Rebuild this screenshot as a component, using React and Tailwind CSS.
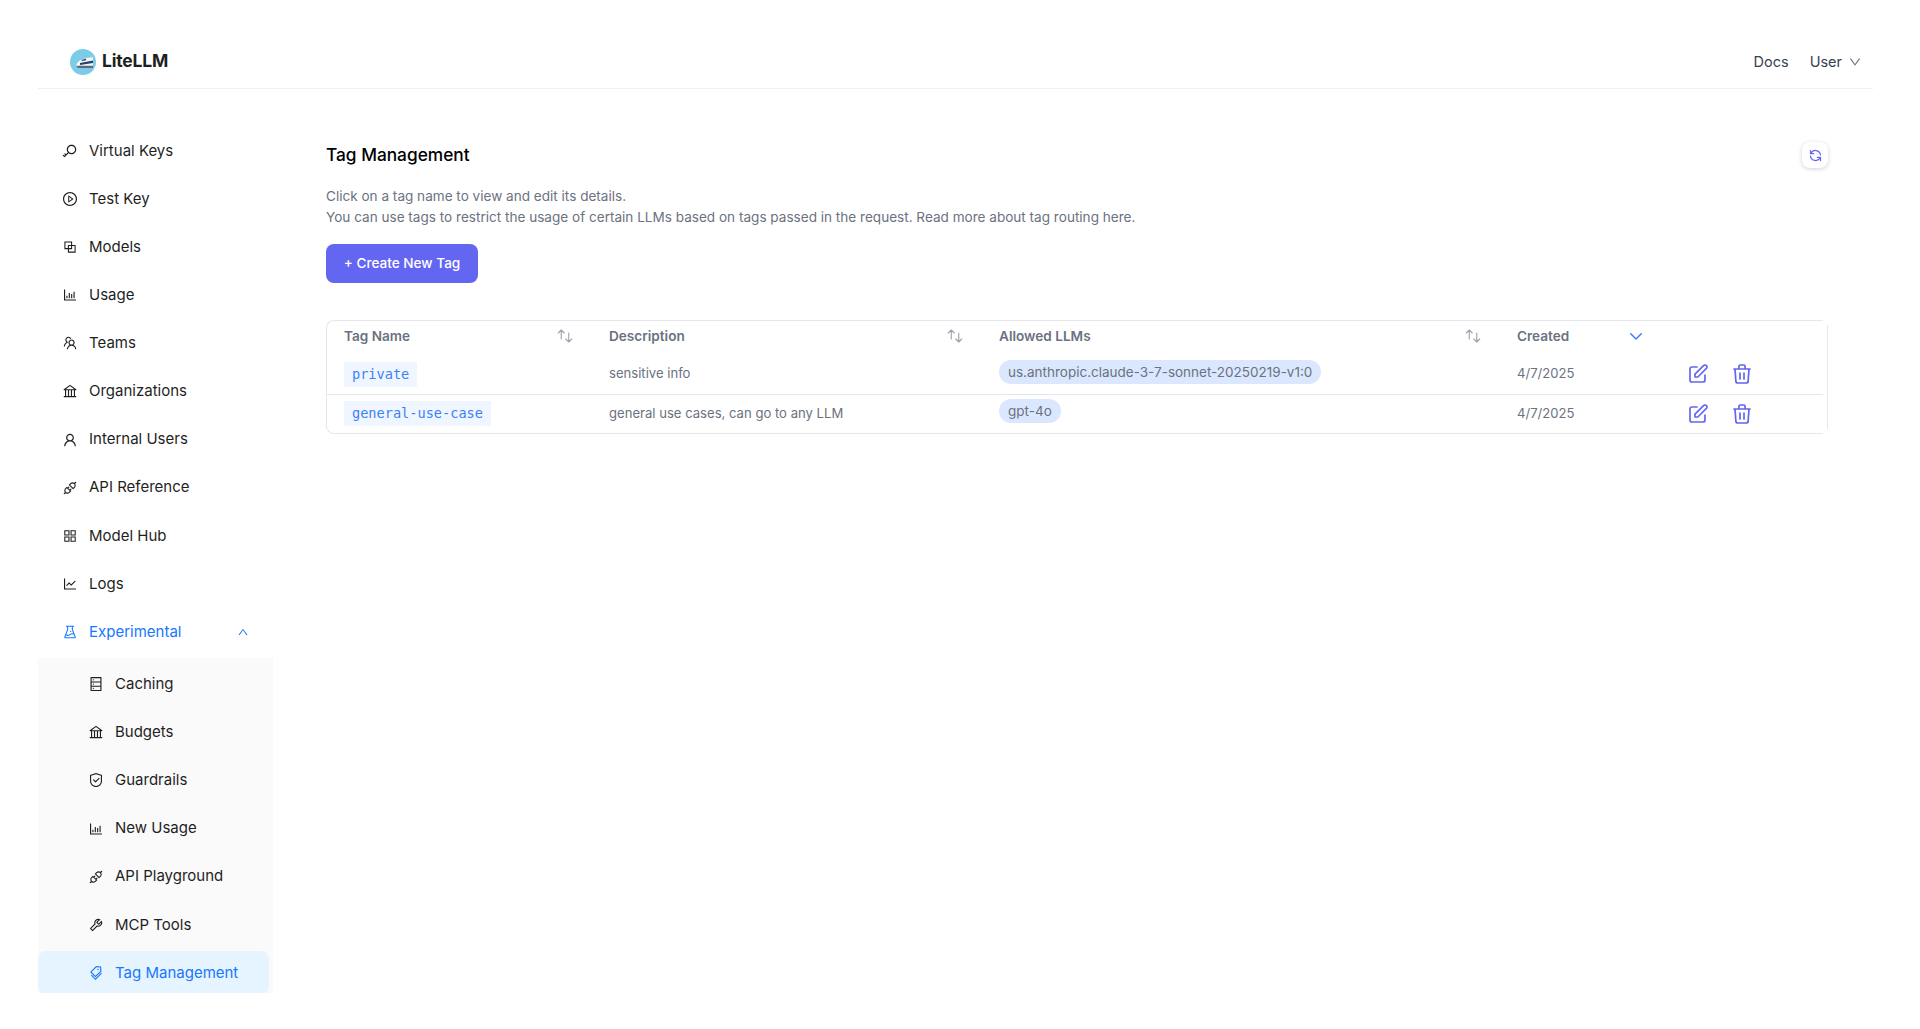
import React from 'react';
import {
    AiOutlineKey, AiOutlinePlayCircle, AiOutlineBlock, AiOutlineBarChart, AiOutlineTeam, AiOutlineBank,
    AiOutlineUser, AiOutlineApi, AiOutlineAppstore, AiOutlineLineChart, AiOutlineExperiment, AiOutlineDatabase,
    AiOutlineSafety, AiOutlineTool, AiOutlineTags, AiOutlineDown, AiOutlineUp,
} from 'react-icons/ai';
import {
    HiOutlineSwitchVertical, HiOutlineChevronDown, HiOutlinePencilAlt, HiOutlineTrash, HiOutlineRefresh,
} from 'react-icons/hi';

const topItems = [
    { label: 'Virtual Keys', icon: AiOutlineKey },
    { label: 'Test Key', icon: AiOutlinePlayCircle },
    { label: 'Models', icon: AiOutlineBlock },
    { label: 'Usage', icon: AiOutlineBarChart },
    { label: 'Teams', icon: AiOutlineTeam },
    { label: 'Organizations', icon: AiOutlineBank },
    { label: 'Internal Users', icon: AiOutlineUser },
    { label: 'API Reference', icon: AiOutlineApi },
    { label: 'Model Hub', icon: AiOutlineAppstore },
    { label: 'Logs', icon: AiOutlineLineChart },
];

const subItems = [
    { label: 'Caching', icon: AiOutlineDatabase },
    { label: 'Budgets', icon: AiOutlineBank },
    { label: 'Guardrails', icon: AiOutlineSafety },
    { label: 'New Usage', icon: AiOutlineBarChart },
    { label: 'API Playground', icon: AiOutlineApi },
    { label: 'MCP Tools', icon: AiOutlineTool },
];

const tags = [
    { name: 'private', description: 'sensitive info', model: 'us.anthropic.claude-3-7-sonnet-20250219-v1:0', created: '4/7/2025' },
    { name: 'general-use-case', description: 'general use cases, can go to any LLM', model: 'gpt-4o', created: '4/7/2025' },
];

const Logo = () => (
    <svg viewBox="0 0 26 26" className="w-[26px] h-[26px] shrink-0">
        <circle cx="13" cy="13" r="13" fill="#7ccbe8" />
        <path d="M6 16.500c1-3.500 5-6.500 10-7.500l7-.8V17H6z" fill="#f4f6f8" />
        <path d="M10 14l13-2.500V14l-13 2z" fill="#27406f" />
        <path d="M6 16.800h17V19H8z" fill="#5b6a7c" />
        <path d="M11.500 11l4.500-1.500v1.700l-4 .8z" fill="#33415c" />
    </svg>
);

const SideItem = ({ item, sub }) => {
    const Icon = item.icon;
    return (
        <div className={`flex items-center h-10 gap-[11px] ${sub ? 'pl-[50px] mb-[8.2px]' : 'pl-6 mb-[8.1px]'}`}>
            <Icon className="w-4 h-4 shrink-0" />
            <span>{item.label}</span>
        </div>
    );
};

const Sidebar = () => (
    <div className="w-[235px] h-[904px] shrink-0 overflow-hidden pt-[42px] text-[15px] text-[#1f1f1f]">
        {topItems.map(item => <SideItem key={item.label} item={item} />)}
        <div className="flex items-center justify-between h-10 pl-6 pr-6 text-[#1677ff]">
            <div className="flex items-center gap-[11px]">
                <AiOutlineExperiment className="w-4 h-4" />
                <span>Experimental</span>
            </div>
            <AiOutlineUp className="w-3 h-3" />
        </div>
        <div className="mt-[6px] pt-[6px] bg-[#fafafa]">
            {subItems.map(item => <SideItem key={item.label} item={item} sub />)}
            <div className="flex items-center -mt-[2px] h-[43px] pt-px pl-[50px] gap-[11px] w-[231px] rounded-lg bg-[#e6f4ff] text-[#1677ff]">
                <AiOutlineTags className="w-4 h-4 shrink-0" />
                <span>Tag Management</span>
            </div>
        </div>
    </div>
);

const HeaderCell = ({ label, sorted }) => (
    <th className="px-[17px] h-[34px] pt-[5px] align-top text-left font-semibold text-[13.6px] text-[#6b7280]">
        <div className="flex items-center justify-between h-5">
            <span>{label}</span>
            {sorted
                ? <HiOutlineChevronDown className="w-[18px] h-[18px] -mr-[2px] text-[#3b82f6]" />
                : <HiOutlineSwitchVertical className="w-[18px] h-[18px] mr-px text-[#9ca3af]" style={{ strokeWidth: 1.5 }} />}
        </div>
    </th>
);

const TagTable = () => (
    <div className="flex mt-[37px]">
        <div className="w-[1497px] border-y border-l border-[#e5e7eb] rounded-l-lg">
            <table className="w-full table-fixed border-collapse text-[13.1px] text-[#6b7280]">
                <colgroup>
                    <col className="w-[265px]" />
                    <col className="w-[390px]" />
                    <col className="w-[518px]" />
                    <col className="w-[160px]" />
                    <col />
                </colgroup>
                <thead>
                    <tr>
                        <HeaderCell label="Tag Name" />
                        <HeaderCell label="Description" />
                        <HeaderCell label="Allowed LLMs" />
                        <HeaderCell label="Created" sorted />
                        <th />
                    </tr>
                </thead>
                <tbody>
                    {tags.map((t, i) => (
                        <tr key={t.name} className={i === 0 ? 'border-b border-[#e5e7eb]' : ''}>
                            <td className="px-[17px] h-[39px] align-middle">
                                <span className="block w-fit bg-[#eff6ff] text-[#3b82f6] px-2 h-[25px] leading-[25px] text-[13.6px] font-['DejaVu_Sans_Mono',monospace]">{t.name}</span>
                            </td>
                            <td className="px-[17px] align-middle">{t.description}</td>
                            <td className="px-[17px] align-middle">
                                <span className="block w-fit bg-[#dbe7fe] rounded-full px-[9px] h-6 leading-6 mb-[5px] text-[13.5px]">{t.model}</span>
                            </td>
                            <td className="px-[17px] align-middle">{t.created}</td>
                            <td className="pl-[26px] align-middle">
                                <div className="flex items-center gap-5 text-[#6366f1]">
                                    <HiOutlinePencilAlt className="w-6 h-6" style={{ strokeWidth: 1.7 }} />
                                    <HiOutlineTrash className="w-6 h-6" style={{ strokeWidth: 1.7 }} />
                                </div>
                            </td>
                        </tr>
                    ))}
                </tbody>
            </table>
        </div>
        <div className="w-px my-[5px] ml-1 bg-[#e5e7eb]" />
    </div>
);

const App = () => (
    <div className="h-screen overflow-hidden bg-white pl-[38px] pr-[47px] font-['Inter',sans-serif]">
        <header className="flex items-center justify-between h-[89px] pt-[35px] pl-[32px] pr-[11px] border-b border-[#f0f0f0]">
            <div className="flex items-center gap-[6px]">
                <Logo />
                <span className="text-[17.5px] font-bold text-[#1f1f1f] tracking-[-0.2px]">LiteLLM</span>
            </div>
            <div className="flex items-center text-[14.5px] text-[#374151]">
                <span>Docs</span>
                <span className="ml-[21px]">User</span>
                <AiOutlineDown className="ml-[6px] w-[14px] h-[14px] text-[#6b7280]" />
            </div>
        </header>
        <div className="flex">
            <Sidebar />
            <main className="ml-[53px] w-[1502px] pt-[52px]">
                <div className="flex items-center justify-between h-7">
                    <h1 className="text-[17.3px] font-medium text-black">Tag Management</h1>
                    <button className="flex items-center justify-center w-[26px] h-[26px] rounded-lg bg-white shadow-[0_1px_4px_rgba(0,0,0,0.18)]">
                        <HiOutlineRefresh className="w-[15px] h-[15px] text-[#6366f1]" />
                    </button>
                </div>
                <p className="mt-[17px] text-[13.57px] leading-[21px] text-[#6b7280]">
                    Click on a tag name to view and edit its details.<br />
                    You can use tags to restrict the usage of certain LLMs based on tags passed in the request. Read more about tag routing here.
                </p>
                <button className="mt-4 block w-[152px] h-[39px] rounded-lg bg-[#6366f1] text-white text-[13.6px] font-medium">+ Create New Tag</button>
                <TagTable />
            </main>
        </div>
    </div>
);

export default App;
